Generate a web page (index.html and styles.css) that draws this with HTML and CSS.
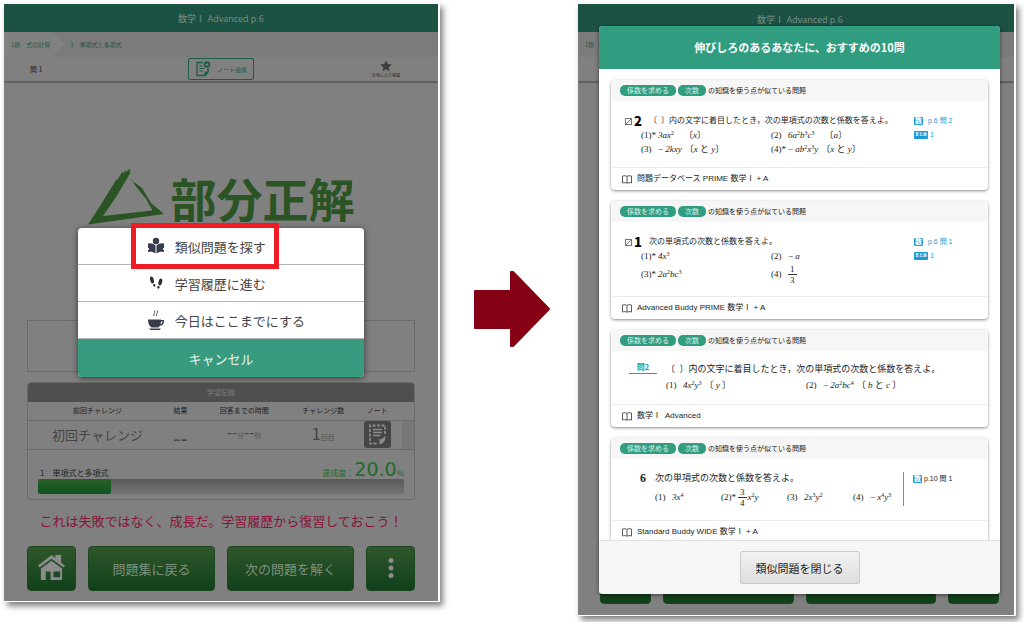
FILE: index.html
```html
<!DOCTYPE html>
<html lang="ja">
<head>
<meta charset="utf-8">
<title>数学Ⅰ Advanced p.6</title>
<link rel="stylesheet" href="styles.css">
</head>
<body>
<main class="stage">

  <section class="screen">
    <div class="page">
      <header class="topbar">数学Ⅰ Advanced p.6</header>
      <nav class="crumbs">
        <a class="crumb crumb-first" href="#">1節　式の計算</a>
        <a class="crumb" href="#">1　単項式と多項式</a>
      </nav>
      <div class="toolbar">
        <span class="question-no">問 1</span>
        <button class="note-button" type="button">
          <svg class="note-icon" viewBox="0 0 16 16" fill="none" stroke="currentColor" stroke-width="1.3"><path d="M8 1.500H2v13h7l4-3.500V7"/><path d="M8.500 15c1.500-1.500 1-3 1-4.500 1.500.5 3 .3 4-1.500 0 3.500-1.500 6-5 6z" fill="currentColor" stroke="none"/><path d="M4.500 5h3M4.500 7.500h5M4.500 10h3" stroke-width="1"/><circle cx="12" cy="3.500" r="3.200" fill="currentColor" stroke="none"/><path d="M12 2v3M10.500 3.500h3" stroke="#808080" stroke-width="1"/></svg>
          ノート連携
        </button>
        <button class="favorite" type="button">
          <svg class="star" viewBox="0 0 12 12"><path fill="#3e3e3e" d="M6 .3l1.700 3.800 4.100.4-3.100 2.700.9 4.100L6 9.200l-3.600 2.100.9-4.100L.2 4.500l4.100-.4z"/></svg>
          お気に入り登録
        </button>
      </div>

      <div class="verdict">
        <svg class="triangle" viewBox="0 0 76 57"><path fill="#2b5424" fill-rule="evenodd" d="M0 56.500L12 38 25 17l3-5 2-1 4-7 1.500 1 2-3v2L42.500.5l-1 3.500 1.500-.5L40 9 28 29 15 48l49.500-5.500L58 31 50 21 43 12l11 8 9 15 13 11zM42.500 10.500l4 4-1.500.2z"/></svg>
        <strong class="verdict-text">部分正解</strong>
      </div>

      <div class="content">
        <div class="answer-box"></div>

        <section class="record">
          <h2 class="record-title">学習記録</h2>
          <table class="record-table">
            <colgroup><col class="c-prev"><col class="c-result"><col class="c-time"><col class="c-count"><col class="c-note"><col></colgroup>
            <thead>
              <tr><th>前回チャレンジ</th><th>結果</th><th>回答までの時間</th><th>チャレンジ数</th><th>ノート</th><th></th></tr>
            </thead>
            <tbody>
              <tr>
                <td class="first-try">初回チャレンジ</td>
                <td class="dash low">--</td>
                <td class="dash">--<small>分</small>--<small>秒</small></td>
                <td class="count">1<small>回目</small></td>
                <td><svg class="sheet-icon" viewBox="0 0 27 27"><rect width="27" height="27" rx="3" fill="#464646"/><path d="M21 13V4.500H6v18h8" fill="none" stroke="#8a8a8a" stroke-width="1.800" stroke-dasharray="3 1.500"/><path d="M9 8.500h9M9 11.500h9M9 14.500h7" stroke="#8a8a8a" stroke-width="1.500"/><path fill="#8a8a8a" d="M15 23.500c1-2 .5-4 .5-5.500 2 .5 3.500-.5 6-3.500 0 4-1 8-6.500 9z"/></svg></td>
                <td class="edge"></td>
              </tr>
            </tbody>
          </table>
          <div class="progress">
            <div class="progress-head">
              <span>1　単項式と多項式</span>
              <span class="rate">達成度：<b>20.0</b>%</span>
            </div>
            <div class="bar" role="progressbar" aria-label="達成度" aria-valuenow="20"><div class="bar-fill" style="width:20%"></div></div>
          </div>
        </section>

        <p class="message">これは失敗ではなく、成長だ。学習履歴から復習しておこう！</p>

        <div class="actions">
          <button class="green" type="button" aria-label="ホーム"><svg class="home-icon" viewBox="0 0 28 26"><path fill="#8c8c8c" fill-rule="evenodd" d="M14 0l4 3V0h6v8l4 3-1.500 2L14 4 1.500 13 0 11zM14 6l11 8v12H13v-9H8v9H3V14zm2 11v6h7v-6z"/></svg></button>
          <button class="green" type="button">問題集に戻る</button>
          <button class="green" type="button">次の問題を解く</button>
          <button class="green" type="button" aria-label="メニュー"><svg class="dots" viewBox="0 0 6 22" fill="#8c8c8c"><circle cx="3" cy="3.500" r="2.500"/><circle cx="3" cy="11" r="2.500"/><circle cx="3" cy="18.500" r="2.500"/></svg></button>
        </div>
      </div>
    </div>

    <div class="sheet" role="dialog" aria-label="メニュー">
      <button class="sheet-item" type="button">
        <svg class="item-icon" viewBox="0 0 16 20" fill="#363c4c"><circle cx="8" cy="5" r="3.200"/><path d="M0 7.500c3-.5 5.500.3 7.500 2v8C5.500 16 3 15.500 0 16v-2h1v-2H0zM16 7.500c-3-.5-5.500.3-7.500 2v8c2-1.500 4.500-2 7.500-1.500v-2h-1v-2h1z"/></svg>
        <span>類似問題を探す</span>
        <i class="highlight"></i>
      </button>
      <button class="sheet-item" type="button">
        <svg class="item-icon" viewBox="0 0 16 20" fill="#2b2b2b"><ellipse cx="4" cy="7" rx="1.800" ry="3.500" transform="rotate(-14 4 7)"/><ellipse cx="6.200" cy="12.300" rx="1.100" ry="1.400"/><ellipse cx="12.300" cy="9" rx="1.800" ry="3.500" transform="rotate(14 12.300 9)"/><ellipse cx="10.400" cy="14.300" rx="1.100" ry="1.400"/></svg>
        <span>学習履歴に進む</span>
      </button>
      <button class="sheet-item" type="button">
        <svg class="item-icon" viewBox="0 0 16 20" fill="#363c4c"><path d="M6 6c-1-2 1.500-2.500.7-5.500M8.500 6c-1-2 2-2.500 1.200-5.500" fill="none" stroke="#363c4c" stroke-width=".9"/><path fill-rule="evenodd" d="M0 9.500h13v.500h3c0 4-1 5.500-4 5.500l-1.500 2h-7C1 16 0 13 0 9.500zm13 2l-.5 2.500c1.200-.3 1.800-1 2-2.500zM1 18.500h12L11.500 20h-9z"/></svg>
        <span>今日はここまでにする</span>
      </button>
      <button class="sheet-cancel" type="button">キャンセル</button>
    </div>
  </section>

  <svg class="arrow" viewBox="0 0 76 76" role="img" aria-label="次へ"><path fill="#850014" stroke="#850014" stroke-width="2" stroke-linejoin="round" d="M1 20h36V1h2l36 37-36 37h-2V57H1z"/></svg>

  <section class="screen">
    <div class="page page-behind">
      <header class="topbar">数学Ⅰ Advanced p.6</header>
      <nav class="crumbs"><a class="crumb" href="#">1節</a></nav>
      <div class="toolbar"></div>
      <div class="actions">
        <button class="green" type="button" aria-label="ホーム"></button>
        <button class="green" type="button" aria-label="戻る"></button>
        <button class="green" type="button" aria-label="次へ"></button>
        <button class="green" type="button" aria-label="メニュー"></button>
      </div>
    </div>

    <div class="modal" role="dialog" aria-labelledby="modal-title">
      <h1 class="modal-title" id="modal-title">伸びしろのあるあなたに、おすすめの10問</h1>
      <div class="cards">

        <article class="card">
          <div class="card-head"><span class="tag">係数を求める</span><span class="tag">次数</span><span>の知識を使う点が似ている問題</span></div>
          <div class="problem">
            <div class="lead"><i class="check"></i><b class="num">2</b></div>
            <div class="question">
              <p class="stem">〔&ensp;〕内の文字に着目したとき，次の単項式の次数と係数を答えよ。</p>
              <div class="parts">
                <div class="part"><span class="no">(1)*</span><span><i>3ax</i><sup>2</sup></span><span class="hint">〔<i>x</i>〕</span></div>
                <div class="part"><span class="no">(2)</span><span><i>6a</i><sup>2</sup><i>b</i><sup>3</sup><i>c</i><sup>3</sup></span><span class="hint">〔<i>a</i>〕</span></div>
                <div class="part"><span class="no">(3)</span><span>− <i>2kxy</i></span><span>〔<i>x</i> と <i>y</i>〕</span></div>
                <div class="part"><span class="no">(4)*</span><span>− <i>ab</i><sup>2</sup><i>x</i><sup>3</sup><i>y</i></span><span>〔<i>x</i> と <i>y</i>〕</span></div>
              </div>
            </div>
            <div class="refs"><span class="ref"><b class="badge">数</b><span class="ref-page">p.6 問 2</span></span><span class="ref"><b class="badge badge-small">まとめ</b>1</span></div>
          </div>
          <div class="card-foot"><svg class="book" viewBox="0 0 10 9"><path d="M5 1.500v6.500M.5 1C2.500.5 4 .7 5 1.500 6 .7 7.500.5 9.500 1v7C7.500 7.500 6 7.500 5 8.300 4 7.500 2.500 7.500.5 8z"/></svg>問題データベース PRIME 数学Ⅰ + A</div>
        </article>

        <article class="card">
          <div class="card-head"><span class="tag">係数を求める</span><span class="tag">次数</span><span>の知識を使う点が似ている問題</span></div>
          <div class="problem">
            <div class="lead"><i class="check"></i><b class="num">1</b></div>
            <div class="question">
              <p class="stem">次の単項式の次数と係数を答えよ。</p>
              <div class="parts">
                <div class="part"><span class="no">(1)*</span><span><i>4x</i><sup>3</sup></span></div>
                <div class="part"><span class="no">(2)</span><span>− <i>a</i></span></div>
                <div class="part tall"><span class="no">(3)*</span><span><i>2a</i><sup>2</sup><i>bc</i><sup>3</sup></span></div>
                <div class="part tall"><span class="no">(4)</span><span class="frac"><span>1</span><span>3</span></span></div>
              </div>
            </div>
            <div class="refs"><span class="ref"><b class="badge">数</b><span class="ref-page">p.6 問 1</span></span><span class="ref"><b class="badge badge-small">まとめ</b>1</span></div>
          </div>
          <div class="card-foot"><svg class="book" viewBox="0 0 10 9"><path d="M5 1.500v6.500M.5 1C2.500.5 4 .7 5 1.500 6 .7 7.500.5 9.500 1v7C7.500 7.500 6 7.500 5 8.300 4 7.500 2.500 7.500.5 8z"/></svg>Advanced Buddy PRIME 数学Ⅰ + A</div>
        </article>

        <article class="card">
          <div class="card-head"><span class="tag">係数を求める</span><span class="tag">次数</span><span>の知識を使う点が似ている問題</span></div>
          <div class="problem large">
            <div class="lead lead-toi"><b class="toi">問2</b></div>
            <div class="question">
              <p class="stem">〔&ensp;〕内の文字に着目したとき，次の単項式の次数と係数を答えよ。</p>
              <div class="parts">
                <div class="part"><span class="no">(1)</span><span><i>4x</i><sup>2</sup><i>y</i><sup>3</sup></span><span>〔 <i>y</i> 〕</span></div>
                <div class="part"><span class="no">(2)</span><span>− <i>2a</i><sup>2</sup><i>bc</i><sup>4</sup></span><span>〔 <i>b</i> と <i>c</i> 〕</span></div>
              </div>
            </div>
          </div>
          <div class="card-foot"><svg class="book" viewBox="0 0 10 9"><path d="M5 1.500v6.500M.5 1C2.500.5 4 .7 5 1.500 6 .7 7.500.5 9.500 1v7C7.500 7.500 6 7.500 5 8.300 4 7.500 2.500 7.500.5 8z"/></svg>数学Ⅰ&ensp;Advanced</div>
        </article>

        <article class="card">
          <div class="card-head"><span class="tag">係数を求める</span><span class="tag">次数</span><span>の知識を使う点が似ている問題</span></div>
          <div class="problem large wide">
            <div class="lead lead-six"><b class="six">6</b></div>
            <div class="question">
              <p class="stem">次の単項式の次数と係数を答えよ。</p>
              <div class="parts four">
                <div class="part tall"><span class="no">(1)</span><span><i>3x</i><sup>4</sup></span></div>
                <div class="part tall"><span class="no">(2)*</span><span class="term"><span class="frac"><span>3</span><span>4</span></span><span><i>x</i><sup>2</sup><i>y</i></span></span></div>
                <div class="part tall"><span class="no">(3)</span><span><i>2x</i><sup>3</sup><i>y</i><sup>2</sup></span></div>
                <div class="part tall"><span class="no">(4)</span><span>− <i>x</i><sup>4</sup><i>y</i><sup>3</sup></span></div>
              </div>
            </div>
            <div class="refs refs-ruled"><span class="ref"><b class="badge">数</b>p.10 問 1</span></div>
          </div>
          <div class="card-foot"><svg class="book" viewBox="0 0 10 9"><path d="M5 1.500v6.500M.5 1C2.500.5 4 .7 5 1.500 6 .7 7.500.5 9.500 1v7C7.500 7.500 6 7.500 5 8.300 4 7.500 2.500 7.500.5 8z"/></svg>Standard Buddy WIDE 数学Ⅰ + A</div>
        </article>

      </div>
      <footer class="modal-foot"><button class="close" type="button">類似問題を閉じる</button></footer>
    </div>
  </section>
</main>
</body>
</html>
```
FILE: styles.css
```css
* { box-sizing: border-box; }
body {
  margin: 0;
  background: #fff;
  font-family: "Noto Sans CJK JP", "Noto Sans", sans-serif;
  color: #222;
}
h1, h2, p { margin: 0; font-weight: 400; }
button { font: inherit; color: inherit; border: 0; padding: 0; background: none; }
svg { display: block; flex: none; }
a { color: inherit; text-decoration: none; }

.stage {
  display: grid;
  grid-template-columns: 434fr 140fr 436fr;
  align-items: start;
  padding: 4px 10px 7px 4px;
}
.screen {
  display: grid;
  background: #808080;
  box-shadow: 1px 0 0 1px #fff, 4px 4px 6px 1px rgba(0, 0, 0, .5);
}
.page, .sheet, .modal { grid-area: 1 / 1; min-width: 0; }
.page { display: flex; flex-direction: column; }
.sheet, .modal { z-index: 1; }
.arrow { width: 76px; margin: 267px 0 0 8px; justify-self: center; }

/* dimmed page */
.topbar {
  height: 28px;
  line-height: 29px;
  background: #1b5243;
  color: #7d8f89;
  font-family: "Open Sans", "Noto Sans CJK JP", sans-serif;
  font-size: 9px;
  text-align: center;
}
.crumbs {
  display: flex;
  height: 25px;
  line-height: 25px;
  background: #7b7b7b;
  color: #1d5848;
  font-size: 6px;
}
.crumb { padding-left: 6px; }
.crumb-first {
  padding: 0 14px 0 7px;
  background: #818181;
  clip-path: polygon(0 0, 80% 0, 100% 50%, 80% 100%, 0 100%);
}
.toolbar {
  display: grid;
  grid-template-columns: 1fr auto 1fr;
  align-items: center;
  height: 25px;
  border-bottom: 1px solid #606060;
  box-shadow: 0 2px 1px -1px #606060;
}
.question-no { padding-left: 26px; font-size: 7px; }
.note-button {
  display: flex;
  align-items: center;
  justify-content: center;
  gap: 6px;
  width: 66px;
  height: 22px;
  border: 1px solid #1d5c49;
  border-radius: 2px;
  color: #1d5c49;
  font-size: 6px;
}
.note-icon { width: 16px; }
.favorite {
  display: flex;
  flex-direction: column;
  align-items: center;
  justify-self: end;
  margin-right: 38px;
  font-size: 4px;
  line-height: 6px;
}
.star { width: 12px; }

.verdict {
  display: flex;
  justify-content: center;
  gap: 7px;
  height: 238px;
  padding-top: 86px;
}
.triangle { width: 76px; height: 57px; }
.verdict-text {
  color: #2b5424;
  font-size: 46px;
  font-weight: 700;
  line-height: 58px;
}
.content { padding: 0 23px 10px; }
.answer-box { height: 52px; margin-bottom: 10px; border: 1px solid #6b6b6b; }

.record { border: 1px solid #6b6b6b; border-radius: 4px; overflow: hidden; }
.record-title {
  height: 19px;
  line-height: 19px;
  background: #4f4f4f;
  color: #7a7a7a;
  font-size: 7px;
  text-align: center;
}
.record-table { width: 100%; table-layout: fixed; border-collapse: collapse; text-align: center; white-space: nowrap; }
.c-prev { width: 36%; }
.c-result { width: 7%; }
.c-time { width: 26%; }
.c-count { width: 15%; }
.c-note { width: 13%; }
.record-table th { height: 18px; padding: 0; color: #202020; font-size: 7px; font-weight: 400; line-height: 17px; }
.record-table td { height: 29px; padding: 0; border: solid #696969; border-width: 1px 0; color: #444; line-height: 24px; }
.record-table small { font-size: 7px; color: #555; }
.record-table .first-try { font-size: 13px; }
.record-table .dash { font: 14px/24px "DejaVu Sans", "Noto Sans CJK JP", sans-serif; }
.record-table .low { padding-top: 8px; font-size: 20px; line-height: 20px; }
.record-table .count { font-size: 16px; }
.sheet-icon { width: 27px; margin: 0 auto; }
.record-table .edge { background: #767676; }

.progress { padding: 9px 10px 5px; font-size: 8px; }
.progress-head { display: flex; justify-content: space-between; align-items: baseline; height: 20px; line-height: 20px; padding: 0 0 0 2px; }
.rate { color: #1f6b2d; white-space: nowrap; }
.rate b { font: 19px/20px "DejaVu Sans", sans-serif; }
.bar { height: 15px; border-radius: 2px; background: linear-gradient(#595959, #757575); overflow: hidden; }
.bar-fill { height: 100%; border-radius: 2px; background: linear-gradient(#2c6128, #0b5220); }

.message { margin-top: 11px; color: #8a1139; font-size: 13px; line-height: 20px; text-align: center; white-space: nowrap; }
.actions { display: grid; grid-template-columns: 49fr 127fr 127fr 49fr; gap: 12px; margin-top: 15px; }
.green {
  display: flex;
  align-items: center;
  justify-content: center;
  height: 45px;
  border: 1px solid #1a4720;
  border-radius: 4px;
  background: linear-gradient(#30572b, #10401b);
  color: #7f917c;
  font-size: 13px;
}
.home-icon { width: 27px; }
.dots { width: 6px; }

/* action sheet */
.sheet {
  align-self: start;
  justify-self: center;
  width: 66%;
  margin-top: 224px;
  border-radius: 4px;
  background: #fff;
  box-shadow: 0 1px 6px rgba(0, 0, 0, .6);
}
.sheet-item {
  position: relative;
  display: flex;
  align-items: center;
  gap: 11px;
  width: 100%;
  height: 37px;
  padding-left: 70px;
  border-bottom: 1px solid #b5b5b5;
  color: #444;
  font-size: 13px;
}
.item-icon { width: 16px; }
.highlight { position: absolute; top: -5px; left: 53px; width: 148px; height: 46px; border: 5px solid #ee1c25; }
.sheet-cancel { display: block; width: 100%; height: 38px; border-radius: 0 0 4px 4px; background: #389b80; color: #e6f5f0; font-size: 13px; }

/* recommendation screen */
.page-behind .topbar { padding-left: 8px; line-height: 31px; }
.page-behind .crumb { padding-left: 7px; }
.page-behind .actions { margin: auto 15px 11px 22px; }
.page-behind .green { background: #12401b; }

.modal {
  margin: 22px 14px 21px 21px;
  border-radius: 4px;
  background: #fff;
  overflow: hidden;
  box-shadow: 0 1px 4px rgba(0, 0, 0, .5);
}
.modal-title { height: 43px; background: #309c80; color: #fff; font-size: 11px; font-weight: 700; line-height: 43px; text-align: center; }
.cards { display: flex; flex-direction: column; gap: 11px; height: 471px; padding: 11px 12px 0; overflow: hidden; }
.card { flex: none; border-radius: 4px; box-shadow: 0 1px 3px rgba(0, 0, 0, .45); overflow: hidden; }
.card-head { display: flex; align-items: center; gap: 2px; height: 21px; padding-left: 9px; background: #f6f6f6; font-size: 7px; line-height: 11px; white-space: nowrap; }
.tag { padding: 0 7px; border-radius: 5px; background: #309c80; color: #d9f0e8; }
.problem {
  display: flex;
  padding: 13px 0 11px 14px;
  border-bottom: 1px solid #ececec;
  font-family: "Liberation Serif", "Noto Sans CJK JP", serif;
  font-size: 8px;
  line-height: 14px;
  white-space: nowrap;
}
.lead { display: flex; align-items: center; gap: 2px; width: 24px; height: 14px; }
.check { width: 7px; height: 7px; border: 1px solid #777; background: linear-gradient(135deg, transparent 42%, #777 42% 58%, transparent 58%); }
.num { font: 900 13px/14px "Noto Sans CJK JP", sans-serif; color: #000; }
.question { width: 265px; }
.parts { display: grid; grid-template-columns: 130px 1fr; margin-left: -8px; font-size: 9px; }
.part { display: flex; align-items: center; gap: 3px; height: 14px; }
.tall { height: 22px; }
.no { width: 14px; flex: none; }
.hint { margin-left: 7px; }
.part sup { font-size: 6px; line-height: 0; vertical-align: 3px; }
.term { display: flex; align-items: center; gap: 1px; }
.frac { display: flex; flex-direction: column; text-align: center; line-height: 10px; }
.frac span { padding: 0 2px; }
.frac span + span { border-top: 1px solid #333; }
.refs { display: flex; flex-direction: column; color: #1a9bd7; font: 7px/14px "Liberation Sans", "Noto Sans CJK JP", sans-serif; }
.ref { display: flex; align-items: center; gap: 2px; height: 14px; }
.ref-page { margin-left: 3px; }
.badge { padding: 0 1px; border-radius: 1px; background: #1a9bd7; color: #fff; font-size: 7px; line-height: 8px; }
.badge-small { font-size: 4px; }

.large { padding: 10px 0 11px 18px; font-size: 9px; line-height: 16px; }
.large .parts { grid-template-columns: 140px 1fr; margin-left: 0; }
.large .part { height: 16px; }
.large .part.tall { height: 22px; }
.lead-toi { width: 37px; align-items: start; }
.toi { width: 28px; border-bottom: 1px solid #1ba3a3; color: #1ba3a3; font: 700 8px/12px "Noto Sans CJK JP", sans-serif; text-align: center; }
.lead-six { width: 26px; padding-left: 11px; height: 16px; }
.six { font-size: 12px; }
.large .parts.four { grid-template-columns: repeat(4, 66px); }
.wide { padding: 11px 0 12px 18px; }
.wide .question { width: 248px; }
.refs-ruled { align-self: center; height: 34px; padding-left: 9px; border-left: 1px solid #888; color: #222; }
.card-foot { display: flex; align-items: center; gap: 5px; height: 22px; padding-left: 11px; font: 8px/22px "Liberation Sans", "Noto Sans CJK JP", sans-serif; }
.book { width: 10px; fill: none; stroke: #333; stroke-width: .8px; }
.modal-foot { display: flex; justify-content: center; padding: 10px 0 10px; border-top: 1px solid #e2e2e2; background: #f6f6f6; }
.close { width: 120px; height: 33px; border: 1px solid #ccc; border-radius: 2px; background: linear-gradient(#f2f2f2, #dedede); color: #222; font-size: 11px; }
```
